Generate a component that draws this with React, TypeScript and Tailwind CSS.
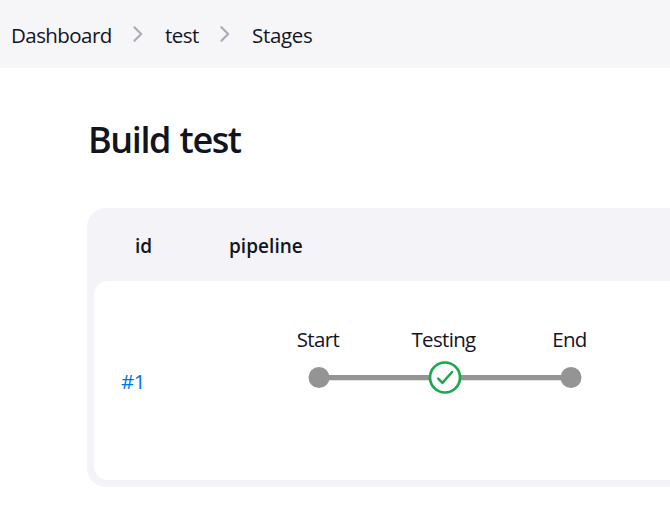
import { Fragment } from "react";

const crumbs = [
  { name: "Dashboard", style: "w-[100px] tracking-[-0.57px]" },
  { name: "test", style: "w-[34px] pl-px tracking-[-0.5px]" },
  { name: "Stages", style: "w-[61px] pl-px tracking-[-0.3px]" },
];

function Chevron() {
  return (
    <svg className="h-[18px] w-3 shrink-0" viewBox="0 0 12 18" fill="none" stroke="#aaaab8" strokeWidth="2.1" strokeLinecap="round" strokeLinejoin="round">
      <path d="M2.4 2.2 9.2 9l-6.8 6.8" />
    </svg>
  );
}

function Breadcrumbs() {
  return (
    <nav className="flex h-[68px] items-center bg-[#f6f6f8] pl-[11px] pt-px text-[20.5px] leading-7">
      {crumbs.map((crumb, i) => (
        <Fragment key={crumb.name}>
          {i > 0 && (
            <span className="mb-0.5 flex w-[53px] justify-center">
              <Chevron />
            </span>
          )}
          <span className={`whitespace-nowrap ${crumb.style}`}>{crumb.name}</span>
        </Fragment>
      ))}
    </nav>
  );
}

const stages = [
  { name: "Start", style: "pr-0.5 tracking-[-0.6px]" },
  { name: "Testing", style: "pr-[3px] tracking-[-0.65px]" },
  { name: "End", style: "pr-[3px] tracking-[-0.7px]" },
];

function Pipeline() {
  return (
    <div className="mt-11 w-[378px]">
      <div className="grid grid-cols-3 text-center text-[20.5px] leading-7">
        {stages.map((stage) => (
          <span key={stage.name} className={stage.style}>{stage.name}</span>
        ))}
      </div>
      <svg className="mt-[5px] block h-[40px] w-[378px]" viewBox="0 0 378 40" fill="none">
        <path d="M63 19.65h252" stroke="#949494" strokeWidth="5.3" />
        <circle cx="63" cy="19.5" r="10.5" fill="#949494" />
        <circle cx="315" cy="19.5" r="10.5" fill="#949494" />
        <circle cx="189" cy="19.5" r="15" fill="#fff" stroke="#1ea64b" strokeWidth="2.7" />
        <path d="m182.2 20.7 4.2 4.1 9.7-10.8" stroke="#1ea64b" strokeWidth="2.5" strokeLinecap="round" strokeLinejoin="round" />
      </svg>
    </div>
  );
}

export default function App() {
  return (
    <div className="h-[526px] w-[670px] overflow-hidden bg-white font-['Open_Sans','Noto_Sans',sans-serif] text-[#14141f]">
      <Breadcrumbs />
      <main className="pl-[87px]">
        <h1 className="flex h-[140px] pl-px pt-[48px] text-[36px] font-semibold leading-[48px] tracking-[-1.4px] [word-spacing:1.5px]">Build test</h1>
        <section className="h-[279px] w-[640px] rounded-[19px] bg-[#f3f3f8] px-[7px] pb-[7px]">
          <div className="grid h-[73px] grid-cols-[94px_1fr] items-center pl-[41px] pt-[3px] text-[19px] font-semibold tracking-[0.04px]">
            <span>id</span>
            <span>pipeline</span>
          </div>
          <div className="grid h-[199px] grid-cols-[162px_1fr] rounded-[14px] bg-white">
            <a className="pl-[27px] pt-[86px] text-[20.5px] leading-7 tracking-[-0.5px] text-[#0073f0]">#1</a>
            <Pipeline />
          </div>
        </section>
      </main>
    </div>
  );
}
